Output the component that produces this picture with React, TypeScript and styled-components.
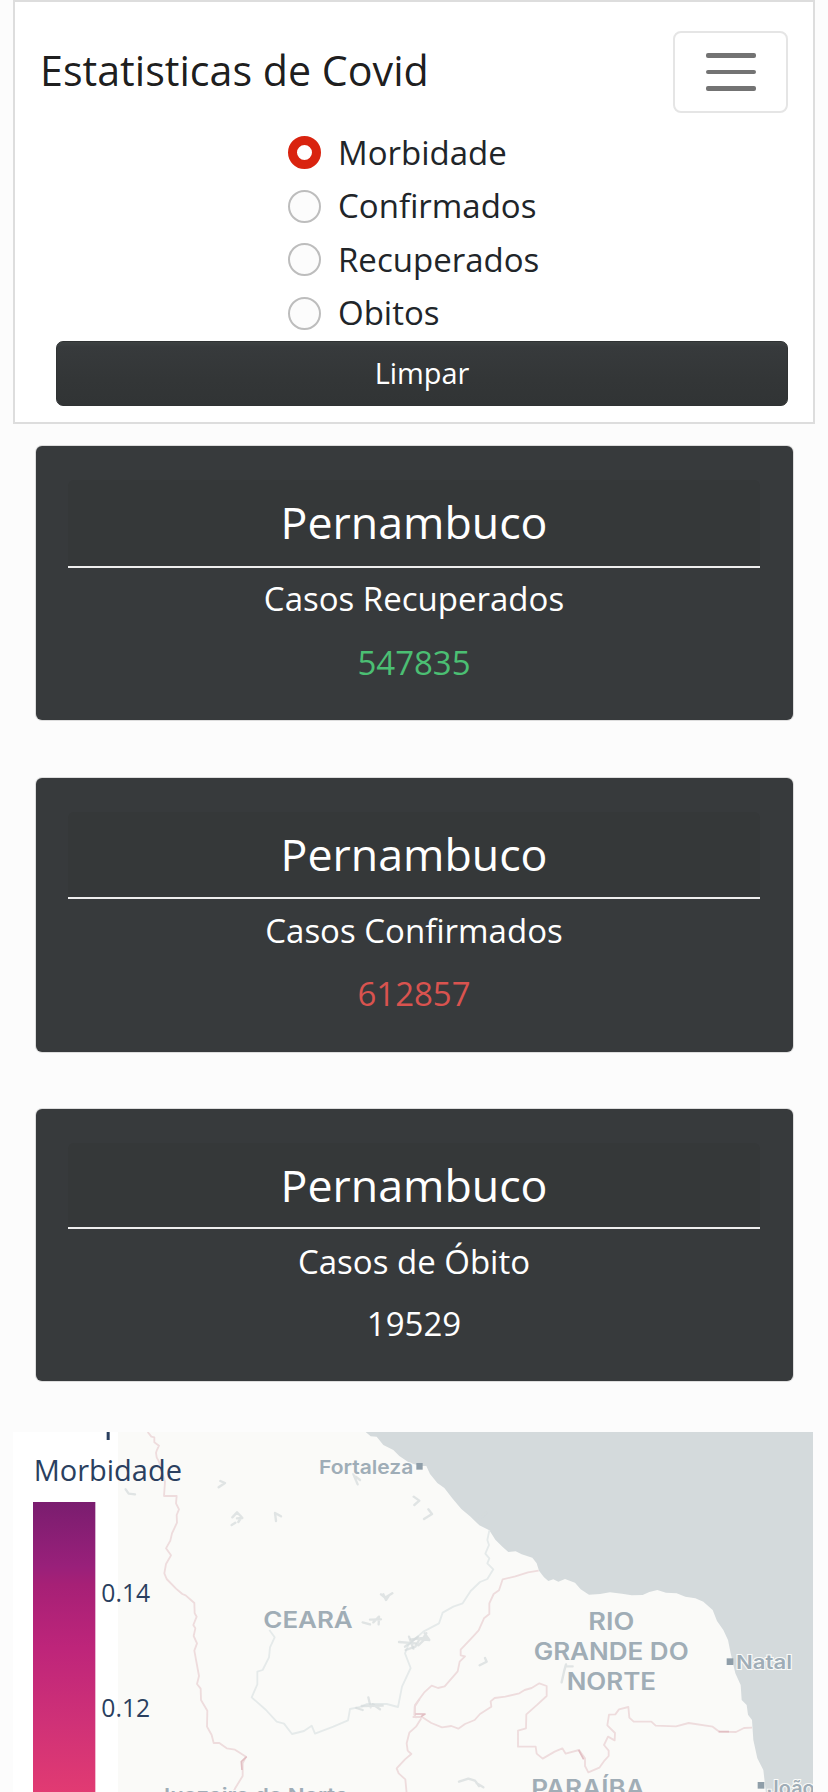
import React, { useState } from "react";
import styled, { createGlobalStyle } from "styled-components";

const GlobalStyle = createGlobalStyle`
  *, *::before, *::after { box-sizing: border-box; }
  html { background: #fcfcfc; }
  body {
    margin: 0;
    background: #fcfcfc;
    color: #212529;
    font-family: "Open Sans", "Noto Sans", sans-serif;
    overflow: hidden;
  }
`;

const Page = styled.div`
  display: flex;
  flex-direction: column;
  height: 1792px;
  padding: 0 13px;
  overflow: hidden;
`;

const Navbar = styled.nav`
  flex: none;
  display: flex;
  flex-direction: column;
  height: 424px;
  padding: 29px 25px 0 27px;
  border: 2px solid #ddd;
  background: #fff;
`;

const NavTop = styled.div`
  display: flex;
  justify-content: space-between;
  align-items: center;
  height: 82px;
`;

const Brand = styled.span`
  color: rgba(0, 0, 0, 0.9);
  font-size: 41.2px;
  line-height: 60px;
  margin-top: -4px;
  margin-left: -2px;
  white-space: nowrap;
`;

const Toggler = styled.button`
  display: flex;
  flex-direction: column;
  align-items: center;
  justify-content: center;
  gap: 12.2px;
  width: 115px;
  height: 82px;
  padding: 0;
  border: 2px solid #e5e5e5;
  border-radius: 8px;
  background: transparent;
`;

const TogglerBar = styled.span`
  width: 50px;
  height: 4.3px;
  border-radius: 2px;
  background: #737373;
`;

const RadioList = styled.div`
  display: flex;
  flex-direction: column;
  margin: 13px 0 0 246px;
`;

const RadioRow = styled.label`
  display: flex;
  align-items: center;
  gap: 17px;
  height: 53.5px;
  font-size: 33px;
  line-height: 50px;
`;

const Radio = styled.input.attrs({ type: "radio" })`
  appearance: none;
  width: 33px;
  height: 33px;
  margin: 0;
  border: 2px solid #bdbdbd;
  border-radius: 50%;
  background: #fcfcfc;
  &:checked {
    border: 9.5px solid #d9230f;
    background: #fff;
  }
`;

const ClearButton = styled.button`
  height: 64.5px;
  margin: 1px 0 0 14px;
  padding: 0;
  border: 1px solid #2f3233;
  border-radius: 7px;
  background: linear-gradient(#3d4142 0, #373a3c 8%, #333637 60%, #313435 100%);
  color: #fff;
  font: 28.9px/62px "Open Sans", "Noto Sans", sans-serif;
`;

const Cards = styled.div`
  flex: none;
  display: flex;
  flex-direction: column;
  height: 1008px;
  padding: 22px 22.5px 0;
`;

const Card = styled.section<{ $height: number; $gap: number }>`
  flex: none;
  height: ${(p) => p.$height}px;
  margin-bottom: ${(p) => p.$gap}px;
  padding: 34px 32.5px 0;
  border-radius: 6px;
  background: #373a3c;
  box-shadow: 0 0 0 1px rgba(0, 0, 0, 0.12);
  color: #fff;
  text-align: center;
`;

const CardHeader = styled.h4<{ $height: number }>`
  height: ${(p) => p.$height}px;
  margin: 0;
  padding-top: 13px;
  border-bottom: 2px solid #eee;
  border-radius: 6px 6px 0 0;
  background: #353839;
  font-size: 44.7px;
  font-weight: 400;
  line-height: 58px;
`;

const CardLabel = styled.p<{ $space: number }>`
  margin: ${(p) => p.$space}px 0 0;
  font-size: 33px;
  line-height: 50px;
`;

const CardValue = styled.p<{ $color: string; $space: number }>`
  margin: ${(p) => p.$space}px 0 0;
  color: ${(p) => p.$color};
  font-size: 33px;
  line-height: 50px;
`;

const MapPanel = styled.div`
  flex: none;
  width: 800px;
  height: 360px;
  overflow: hidden;
  background: #fff;
`;

const MapSvg = styled.svg`
  display: block;
  width: 800px;
  height: 360px;

  .border { fill: none; stroke: #eedcdd; stroke-width: 5.5; stroke-linejoin: round; }
  .accent { fill: none; stroke: #e2bfc3; stroke-width: 5; stroke-linejoin: round; }
  .river { fill: none; stroke: #e5eaea; stroke-width: 5.5; stroke-linejoin: round; }
  .lake { fill: none; stroke: #d4dadc; stroke-opacity: 0.7; stroke-width: 7; stroke-linejoin: round; stroke-linecap: round; }
  .place {
    fill: #9fadb7;
    font-family: "Inter", "Open Sans", sans-serif;
    font-weight: 600;
    stroke: #fafaf8;
    stroke-width: 6;
    paint-order: stroke;
  }
  .region { fill: #a0adb6; font-family: "Inter", "Open Sans", sans-serif; font-weight: 600; }
  .legend { fill: #2a3f5f; font-family: "Open Sans", sans-serif; }
`;

const OPTIONS = ["Morbidade", "Confirmados", "Recuperados", "Obitos"];

const CARDS = [
  { label: "Casos Recuperados", value: "547835", color: "#4bbf73", height: 274, header: 88, gap: 57.5, labelSpace: 6, valueSpace: 14 },
  { label: "Casos Confirmados", value: "612857", color: "#d9534f", height: 274, header: 87.5, gap: 57.5, labelSpace: 7, valueSpace: 13 },
  { label: "Casos de Óbito", value: "19529", color: "#ffffff", height: 271.5, header: 85.5, gap: 0, labelSpace: 8, valueSpace: 12 },
];

interface LabelProps {
  x: number;
  y: number;
  size: number;
  width: number;
  kind: "place" | "region";
  children: string;
}

function MapLabel({ x, y, size, width, kind, children }: LabelProps) {
  return (
    <text className={kind} x={x} y={y} fontSize={size} textLength={width} lengthAdjust="spacingAndGlyphs">
      {children}
    </text>
  );
}

function CovidMap() {
  return (
    <MapPanel>
      <MapSvg viewBox="39 66 2400 1080">
        <defs>
          <linearGradient id="scale" x1="0" y1="0" x2="0" y2="1">
            <stop offset="0" stopColor="#7a1d6f" />
            <stop offset="0.22" stopColor="#99207a" />
            <stop offset="0.28" stopColor="#a62076" />
            <stop offset="0.5" stopColor="#be257a" />
            <stop offset="0.75" stopColor="#cf3177" />
            <stop offset="1" stopColor="#e23b72" />
          </linearGradient>
        </defs>
        <rect x="354" y="60" width="2090" height="1090" fill="#fafaf8" />
        <path
          fill="#d4dadc"
          d="M1090 60L1112 79L1130 80L1150 105L1180 120L1198 138L1228 158L1262 168L1279 168L1290 192L1312 219L1333 234L1358 266L1384 297L1410 319L1438 346L1468 361L1486 389L1508 411L1525 426L1547 424L1565 433L1597 443L1610 460L1617 482L1632 502L1645 513L1660 508L1675 515L1695 507L1725 518L1742 538L1767 554L1800 552L1830 547L1866 551L1895 556L1928 555L1948 546L1972 540L1998 548L2030 550L2056 560L2086 565L2110 575L2138 600L2151 633L2170 660L2184 690L2192 730L2206 790L2222 825L2225 870L2240 885L2244 914L2256 930L2260 990L2272 1045L2290 1080L2298 1150L2444 1150V60Z"
        />

        <path className="border" d="M443 66L454 80L463 82L463 97L477 107L470 122L468 128L470 142L477 155L483 175L495 215L492 258H530L528 280L537 298L530 315L531 338L516 370L511 392L498 415L513 436L498 462L493 490L500 507L528 536L547 552L557 556L583 579L584 610L590 620L580 645L586 655L581 678L591 700L583 722L597 798L591 822L602 836L603 870L622 902L621 950L635 975L641 999H658L680 1015L705 1019L738 1040L728 1060V1098L706 1134L698 1150" />
        <path className="accent" d="M740 1040L724 1055L726 1080" />
        <path className="river" d="M808 660L824 682L810 712L807 742L788 780L772 785V823L755 862L798 900L830 935L852 941L876 972L912 963L935 947L945 971L1000 950L1044 931L1050 897L1085 890L1100 882L1160 882L1194 891L1206 830L1232 774L1215 730L1225 705L1270 665L1317 640L1328 608L1360 590L1388 580L1412 543L1440 516L1462 507L1480 478L1462 460L1468 445L1456 431L1467 405L1462 390L1468 361" />

        <g className="lake">
          <path d="M377 238L386 251L405 253M656 232L675 219L661 213M697 322L711 307L725 321L715 336M711 325L727 324M695 345L706 338M828 333L825 309L843 319M1060 192L1073 223M1067 200L1080 210M1241 260L1258 272L1243 285M1143 553L1155 563L1177 550M1150 553L1158 570L1167 556M1088 637L1110 643M1110 629L1143 628M1120 637L1137 620L1136 643" />
          <path d="M1197 696L1247 700M1227 680L1240 716M1215 710L1254 680M1069 894L1088 900M1105 862L1112 892M1118 883L1140 898M1085 888L1148 887" />
          <path d="M1217 720L1246 710L1259 687L1288 690M1233 688L1270 684L1279 670M1255 706L1281 681M1274 670L1288 690" />
          <path d="M1458 309L1438 327M1439 766L1460 755L1455 744M1685 817L1692 785L1698 763M1697 769H1718M1377 1115L1405 1106L1425 1112L1437 1128M1430 1120L1450 1132M1285 298L1296 312L1272 327" />
        </g>

        <g transform="translate(1224 0)">
          <path className="border" d="M392 482L360 487L322 499L284 508L273 541L257 552L244 580V612L228 625L212 661L190 685L158 719V736L171 739L155 755L149 784L110 829L90 834L71 827L48 848L21 885V922" />
          <path className="border" d="M14 921H42L70 939L102 952L130 948L151 956L171 942L200 930L216 912L250 890L248 874L260 864L292 860L334 850L350 840L371 834L394 820L416 828V858L388 884L355 913L354 955L330 962V1010H383L386 1031L404 1046L440 1025L463 1015L473 1031L513 1020L531 1045V1068L541 1087L574 1073L590 1051L602 1038V1022L588 1005L600 980L620 991L621 969L598 946L603 914L622 913L633 898L661 891L664 923L677 935H730L743 947L804 949L842 939L914 950L934 965L984 966L1008 954L1032 953" />
          <path className="accent" d="M18 912H51L39 920M512 1020L527 1048M932 965H963" />
          <path className="border" d="M40 925L24 950L4 968L-4 1000L-1 1022L10 1032L-9 1048L-34 1075L-28 1090L-8 1108L-4 1150M35 867L20 890L19 915L26 924" />
        </g>

        <MapLabel kind="place" x={957} y={192} size={58} width={283}>Fortaleza</MapLabel>
        <rect x="1249" y="159" width="19" height="20" fill="#8f9ea9" />
        <MapLabel kind="region" x={790} y={654} size={70} width={268}>CEARÁ</MapLabel>
        <MapLabel kind="region" x={1765} y={659} size={71} width={138}>RIO</MapLabel>
        <MapLabel kind="region" x={1601} y={750} size={71} width={465}>GRANDE DO</MapLabel>
        <MapLabel kind="region" x={1700} y={840} size={71} width={268}>NORTE</MapLabel>
        <rect x="2180" y="745" width="20" height="20" fill="#8f9ea9" />
        <MapLabel kind="place" x={2208} y={777} size={58} width={168}>Natal</MapLabel>
        <MapLabel kind="region" x={1594} y={1162} size={71} width={340}>PARAÍBA</MapLabel>
        <rect x="2273" y="1116" width="20" height="20" fill="#8f9ea9" />
        <MapLabel kind="place" x={2302} y={1155} size={60} width={142}>João</MapLabel>
        <MapLabel kind="place" x={472} y={1177} size={58} width={572}>Juazeiro do Norte</MapLabel>

        <rect x="320" y="60" width="9" height="30" fill="#2a3f5f" />
        <text className="legend" x="101" y="212" fontSize="87">Morbidade</text>
        <rect x="99" y="276" width="187" height="880" fill="url(#scale)" />
        <text className="legend" x="304" y="575" fontSize="74">0.14</text>
        <text className="legend" x="304" y="920" fontSize="74">0.12</text>
      </MapSvg>
    </MapPanel>
  );
}

export default function App() {
  const [selected, setSelected] = useState(OPTIONS[0]);
  return (
    <Page>
      <GlobalStyle />
      <Navbar>
        <NavTop>
          <Brand>Estatisticas de Covid</Brand>
          <Toggler aria-label="Menu">
            <TogglerBar />
            <TogglerBar />
            <TogglerBar />
          </Toggler>
        </NavTop>
        <RadioList>
          {OPTIONS.map((option) => (
            <RadioRow key={option}>
              <Radio name="metric" checked={selected === option} onChange={() => setSelected(option)} />
              {option}
            </RadioRow>
          ))}
        </RadioList>
        <ClearButton onClick={() => setSelected(OPTIONS[0])}>Limpar</ClearButton>
      </Navbar>
      <Cards>
        {CARDS.map((card) => (
          <Card key={card.label} $height={card.height} $gap={card.gap}>
            <CardHeader $height={card.header}>Pernambuco</CardHeader>
            <CardLabel $space={card.labelSpace}>{card.label}</CardLabel>
            <CardValue $color={card.color} $space={card.valueSpace}>{card.value}</CardValue>
          </Card>
        ))}
      </Cards>
      <CovidMap />
    </Page>
  );
}
